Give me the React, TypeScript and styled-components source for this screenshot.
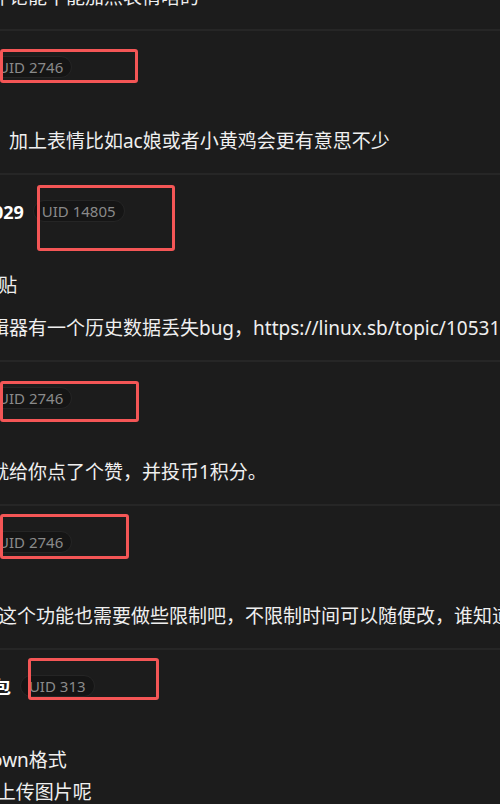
import React from "react";
import styled, { createGlobalStyle } from "styled-components";

const GlobalStyle = createGlobalStyle`
  html, body {
    margin: 0;
    padding: 0;
    background: #1c1c1c;
    overflow: hidden;
  }
  body {
    font-family: "Noto Sans", "Noto Sans CJK SC", sans-serif;
    color: #efefef;
  }
`;

/* The screenshot is a crop of a wider thread: the thread column starts left of the viewport. */
const Thread = styled.main`
  display: flex;
  flex-direction: column;
  margin-left: -110px;
  margin-top: -113px;
  width: 760px;
`;

const Post = styled.article`
  position: relative;
  display: flex;
  flex-direction: column;
  padding: 24px 0 16px;
  border-bottom: 2px solid #262626;
`;

const Header = styled.header`
  display: flex;
  align-items: center;
  gap: 9px;
  height: 24px;
`;

const Name = styled.span`
  font-size: 18px;
  font-weight: 700;
  color: #ffffff;
  white-space: nowrap;
`;

const Badge = styled.span`
  display: inline-flex;
  align-items: center;
  height: 22px;
  padding: 0 8px;
  box-sizing: border-box;
  border-radius: 11px;
  background: #151515;
  border: 1px solid #252525;
  color: #8a8a8a;
  font-size: 15px;
  white-space: nowrap;
`;

const Body = styled.div`
  margin-top: 46px;
  display: flex;
  flex-direction: column;
  gap: 11px;
`;

const Para = styled.p`
  margin: 0;
  font-size: 19px;
  line-height: 32px;
  white-space: nowrap;
  color: #efefef;
`;

const Mark = styled.div<{ $left: number; $top: number; $w: number; $h: number }>`
  position: absolute;
  left: ${(p) => p.$left}px;
  top: ${(p) => p.$top}px;
  width: ${(p) => p.$w}px;
  height: ${(p) => p.$h}px;
  box-sizing: border-box;
  border: 3px solid #f45656;
  border-radius: 3px;
  pointer-events: none;
`;

type PostData = {
  name: string;
  uid: number;
  paras: React.ReactNode[];
  mark: { left: number; top: number; w: number; h: number };
};

const posts: PostData[] = [
  {
    name: "夜雨听风者",
    uid: 2746,
    paras: ["另外请问下 评论能不能加点表情啥的"],
    mark: { left: 110, top: 18, w: 138, h: 34 },
  },
  {
    name: "夜雨听风者",
    uid: 2746,
    paras: ["楼上说得对， 加上表情比如ac娘或者小黄鸡会更有意思不少"],
    mark: { left: 110, top: 18, w: 138, h: 34 },
  },
  {
    name: "深夜食堂201029",
    uid: 14805,
    paras: [
      "mark一下 顶贴",
      "另外 发现编辑器有一个历史数据丢失bug，https://linux.sb/topic/10531",
    ],
    mark: { left: 147, top: 10, w: 138, h: 66 },
  },
  {
    name: "夜雨听风者",
    uid: 2746,
    paras: ["感谢分享 那就给你点了个赞，并投币1积分。"],
    mark: { left: 110, top: 19, w: 139, h: 41 },
  },
  {
    name: "夜雨听风者",
    uid: 2746,
    paras: ["PS. 帖子编辑这个功能也需要做些限制吧，不限制时间可以随便改，谁知道改成什么了"],
    mark: { left: 110, top: 8, w: 129, h: 45 },
  },
  {
    name: "666号小奶黄包",
    uid: 313,
    paras: [
      <>
        支持 markdown格式
        <br />
        ps, 能否直接上传图片呢
      </>,
    ],
    mark: { left: 138, top: 8, w: 131, h: 42 },
  },
];

export default function App() {
  return (
    <>
      <GlobalStyle />
      <Thread>
        {posts.map((p, i) => (
          <Post key={i}>
            <Header>
              <Name>{p.name}</Name>
              <Badge>UID {p.uid}</Badge>
            </Header>
            <Body>
              {p.paras.map((t, j) => (
                <Para key={j}>{t}</Para>
              ))}
            </Body>
            <Mark $left={p.mark.left} $top={p.mark.top} $w={p.mark.w} $h={p.mark.h} />
          </Post>
        ))}
      </Thread>
    </>
  );
}
